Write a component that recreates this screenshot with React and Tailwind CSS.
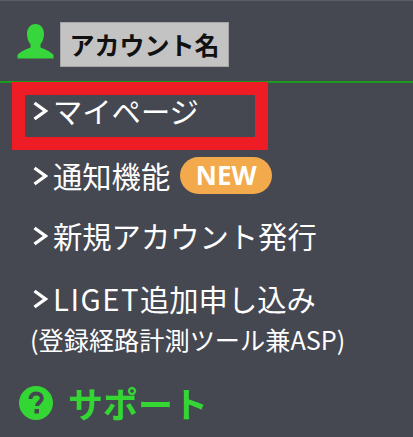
function Chevron() {
  return (
    <svg width="15" height="20" viewBox="0 0 15 20" className="shrink-0 mt-[1px]" fill="none">
      <path d="M1.500 2 L12.500 10 L1.500 18" stroke="#fff" strokeWidth="3.400" />
    </svg>
  );
}

function Row({ children, className = "" }) {
  return (
    <div className={`flex items-center text-white text-[29.3px] leading-[40px] ${className}`}>
      <Chevron />
      <span className="ml-[5px] flex items-center whitespace-nowrap">{children}</span>
    </div>
  );
}

export default function App() {
  return (
    <div
      className="relative w-[413px] h-[437px] overflow-hidden bg-[#454751]"
      style={{ fontFamily: "'Noto Sans CJK JP', sans-serif" }}
    >
      <header className="h-[83px] border-b-2 border-[#1c9a1c] flex items-start pl-[17px] pt-[21px] border-t border-t-[#5a5c66]">
        <svg width="37" height="37" viewBox="0 0 37 37" className="mt-[1px]">
          <path
            fill="#36d63c"
            d="M18.500 1c5.500 0 8.500 4.500 8.500 10 0 4-1.300 7.800-3.500 10.300v3.200c4 1.800 9.500 3.500 13 7.500v3.500H0.500V32c3.500-4 9-5.700 13-7.500v-3.200C11.300 18.800 10 15 10 11c0-5.500 3-10 8.500-10z"
          />
        </svg>
        <div className="ml-[6px] h-[45px] w-[169px] bg-[#c3c3c3] border border-[#a5a5a5] flex items-center justify-center text-[25px] font-bold text-[#111] leading-none whitespace-nowrap">
          アカウント名
        </div>
      </header>

      <nav className="pl-[33px] pt-[7px] flex flex-col">
        <Row>マイページ</Row>
        <Row className="mt-[25px]">
          通知機能
          <span
            className="ml-[10px] w-[92px] h-[37px] rounded-full bg-[#f2aa4c] text-white font-bold text-[26px] leading-none flex items-center justify-center"
            style={{ fontFamily: "'Open Sans', sans-serif" }}
          >
            NEW
          </span>
        </Row>
        <Row className="mt-[20px]">新規アカウント発行</Row>
        <Row className="mt-[23px]">
          <span className="tracking-[1.500px]">LIGET</span>追加申し込み
        </Row>
        <div className="-ml-[3px] mt-[3px] text-white text-[25.200px] leading-[36px] whitespace-nowrap">
          (登録経路計測ツール兼ASP)
        </div>
      </nav>

      <div className="mt-[23px] pl-[19px] flex items-center gap-[15px] text-[#33d633] font-bold text-[35px] leading-[46px]">
        <svg width="34" height="34" viewBox="0 0 34 34">
          <circle cx="17" cy="17" r="17" fill="#33d633" />
          <path
            d="M11.500 13c0-3.500 2.500-5.500 5.700-5.500 3.300 0 5.600 2 5.600 4.700 0 4-4.800 4.300-4.800 7.800"
            fill="none"
            stroke="#454751"
            strokeWidth="4"
          />
          <rect x="15.500" y="23" width="4.500" height="4.500" fill="#454751" />
        </svg>
        サポート
      </div>

      <div className="absolute left-[12px] top-[82px] w-[256px] h-[68px] border-[13px] border-[#ee1c25]" />
    </div>
  );
}
